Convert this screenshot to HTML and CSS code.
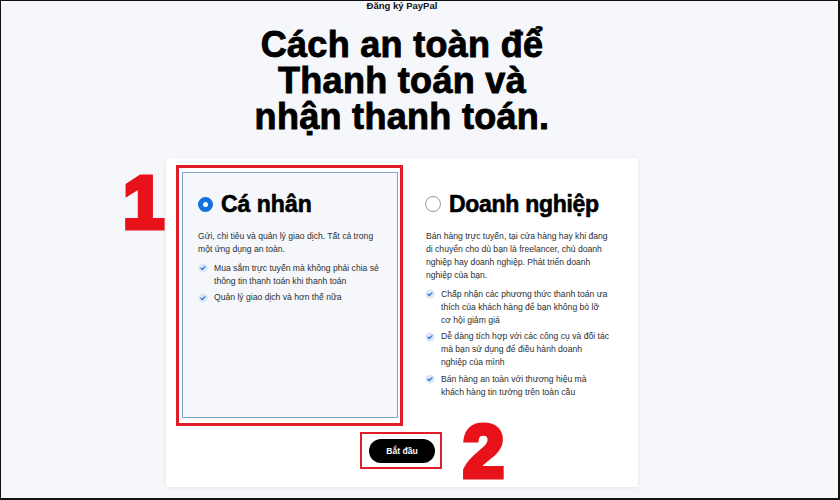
FILE: index.html
```html
<!DOCTYPE html>
<html lang="vi">
<head>
<meta charset="utf-8">
<title>Đăng ký PayPal</title>
<link rel="stylesheet" href="styles.css">
</head>
<body>
<div class="frame">
  <p class="brand">Đăng ký PayPal</p>
  <h1 class="title">Cách an toàn để<br>Thanh toán và<br>nhận thanh toán.</h1>
  <section class="card">
    <div class="options">
      <div class="option selected">
        <div class="opt-head"><span class="radio on"></span><h2>Cá nhân</h2></div>
        <p class="desc">Gửi, chi tiêu và quản lý giao dịch. Tất cả trong một ứng dụng an toàn.</p>
        <ul class="checks">
          <li><svg class="tick" viewBox="0 0 10 10"><circle cx="5" cy="5" r="4.6"/><path d="M2.9 5.1 L4.3 6.5 L7.1 3.6"/></svg><span>Mua sắm trực tuyến mà không phải chia sẻ thông tin thanh toán khi thanh toán</span></li>
          <li><svg class="tick" viewBox="0 0 10 10"><circle cx="5" cy="5" r="4.6"/><path d="M2.9 5.1 L4.3 6.5 L7.1 3.6"/></svg><span>Quản lý giao dịch và hơn thế nữa</span></li>
        </ul>
        <span class="mark mark-option"></span>
      </div>
      <div class="option plain">
        <div class="opt-head"><span class="radio off"></span><h2>Doanh nghiệp</h2></div>
        <p class="desc">Bán hàng trực tuyến, tại cửa hàng hay khi đang di chuyển cho dù bạn là freelancer, chủ doanh nghiệp hay doanh nghiệp. Phát triển doanh nghiệp của bạn.</p>
        <ul class="checks">
          <li><svg class="tick" viewBox="0 0 10 10"><circle cx="5" cy="5" r="4.6"/><path d="M2.9 5.1 L4.3 6.5 L7.1 3.6"/></svg><span>Chấp nhận các phương thức thanh toán ưa<br>thích của khách hàng để bạn không bỏ lỡ<br>cơ hội giảm giá</span></li>
          <li><svg class="tick" viewBox="0 0 10 10"><circle cx="5" cy="5" r="4.6"/><path d="M2.9 5.1 L4.3 6.5 L7.1 3.6"/></svg><span>Dễ dàng tích hợp với các công cụ và đối tác<br>mà bạn sử dụng để điều hành doanh<br>nghiệp của mình</span></li>
          <li><svg class="tick" viewBox="0 0 10 10"><circle cx="5" cy="5" r="4.6"/><path d="M2.9 5.1 L4.3 6.5 L7.1 3.6"/></svg><span>Bán hàng an toàn với thương hiệu mà<br>khách hàng tin tưởng trên toàn cầu</span></li>
        </ul>
      </div>
    </div>
    <div class="actions">
      <button class="start" type="button">Bắt đầu<span class="mark mark-btn"></span></button>
    </div>
  </section>
  <span class="num num-1">1</span>
  <span class="num num-2">2</span>
</div>
</body>
</html>
```
FILE: styles.css
```css
html, body {
  margin: 0;
  padding: 0;
  background: #f6f7fb;
}

body {
  font-family: "Liberation Sans", Arial, sans-serif;
  color: #2c2e2f;
}

.frame {
  position: relative;
  width: 840px;
  height: 500px;
  box-sizing: border-box;
  border: 1px solid #111;
  border-right-width: 2px;
  border-bottom-width: 2px;
  background: #f6f7fb;
  padding-left: 165px;
  overflow: hidden;
}

.brand {
  width: 472px;
  margin: 0;
  text-align: center;
  font-size: 9.5px;
  line-height: 10px;
  font-weight: bold;
  color: #111;
}

.title {
  width: 472px;
  margin: 16px 0 0;
  text-align: center;
  font-size: 36px;
  line-height: 36px;
  font-weight: bold;
  letter-spacing: 0.3px;
  color: #000;
  -webkit-text-stroke: 0.9px #000;
}

.card {
  width: 472px;
  height: 329px;
  box-sizing: border-box;
  margin-top: 23px;
  padding: 14px 16px 0;
  background: #fff;
  border-radius: 2px;
  box-shadow: 0 1px 4px rgba(0, 0, 0, 0.08);
}

.options {
  display: grid;
  grid-template-columns: 216px 1fr;
  column-gap: 12px;
}

.option {
  position: relative;
  height: 246px;
  box-sizing: border-box;
}

.option.selected {
  border: 1px solid #7ea5d6;
  background: #f5f7fb;
  padding: 17px 15px 0;
}

.option.plain {
  padding: 18px 0 0 15px;
}

.opt-head {
  display: flex;
  align-items: center;
  gap: 8px;
  height: 28px;
}

.opt-head h2 {
  margin: 0;
  font-size: 23px;
  line-height: 28px;
  font-weight: bold;
  color: #000;
  -webkit-text-stroke: 0.6px #000;
}

.plain .opt-head h2 {
  letter-spacing: -0.3px;
}

.radio {
  flex: none;
  box-sizing: border-box;
  border-radius: 50%;
  background: #fff;
}

.radio.on {
  width: 15px;
  height: 15px;
  border: 5px solid #1273de;
}

.radio.off {
  width: 16px;
  height: 16px;
  border: 1px solid #9a9a9a;
}

.desc {
  margin: 11.5px 0 0;
  font-size: 8.6px;
  line-height: 13px;
}

.plain .desc {
  max-width: 185px;
  padding-left: 1px;
}

.checks {
  margin: 6px 0 0;
  padding: 0;
  list-style: none;
  display: flex;
  flex-direction: column;
  gap: 3.5px;
  font-size: 8.6px;
  line-height: 13px;
}

.plain .checks span {
  white-space: nowrap;
}

.checks li {
  display: flex;
  align-items: flex-start;
  gap: 6px;
}

.tick {
  flex: none;
  width: 10px;
  height: 10px;
  margin-top: 1.5px;
}

.tick circle {
  fill: #dce8f7;
}

.tick path {
  fill: none;
  stroke: #2f6fd0;
  stroke-width: 1.2;
  stroke-linecap: round;
  stroke-linejoin: round;
}

.actions {
  margin-top: 21px;
  display: flex;
  justify-content: center;
}

.start {
  position: relative;
  width: 66px;
  height: 24px;
  padding: 0;
  border: none;
  border-radius: 12px;
  background: #000;
  color: #fff;
  font-family: "Liberation Sans", Arial, sans-serif;
  font-size: 8.6px;
  font-weight: bold;
}

.mark {
  position: absolute;
  box-sizing: border-box;
  pointer-events: none;
}

.mark-option {
  left: -7px;
  right: -6px;
  top: -8px;
  bottom: -9px;
  border: 3px solid #de1f29;
}

.mark-btn {
  left: -9px;
  right: -7px;
  top: -7px;
  bottom: -6px;
  border: 2px solid #de1f29;
}

.num {
  position: absolute;
  font-family: "Liberation Sans", Arial, sans-serif;
  font-size: 74px;
  line-height: 74px;
  font-weight: bold;
  color: #e8121a;
  -webkit-text-stroke: 5px #e8121a;
  paint-order: stroke fill;
  stroke-linejoin: round;
}

.num-1 {
  left: 122px;
  top: 165px;
}

.num-2 {
  left: 462px;
  top: 414px;
}
```
